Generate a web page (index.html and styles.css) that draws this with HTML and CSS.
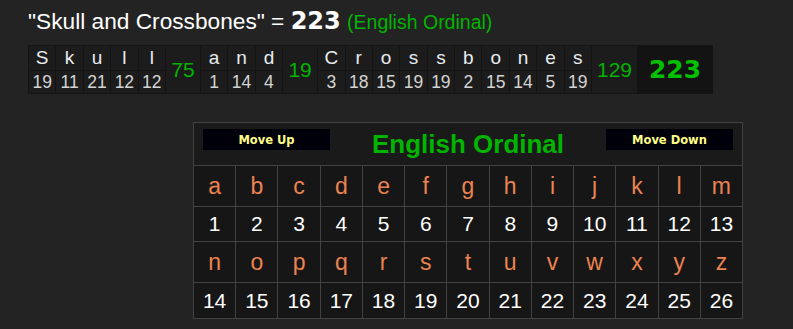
FILE: index.html
```html
<!DOCTYPE html>
<html lang="en">
<head>
<meta charset="utf-8">
<title>Skull and Crossbones – English Ordinal</title>
<link rel="stylesheet" href="styles.css">
</head>
<body>
<div class="page">
  <h1 class="phrase">"Skull and Crossbones" = <b class="phrase-sum">223</b> <span class="phrase-cipher">(English Ordinal)</span></h1>

  <table class="breakdown">
    <tr>
      <td class="ch">S</td><td class="ch">k</td><td class="ch">u</td><td class="ch">l</td><td class="ch">l</td>
      <td class="word-sum" rowspan="2">75</td>
      <td class="ch">a</td><td class="ch">n</td><td class="ch">d</td>
      <td class="word-sum" rowspan="2">19</td>
      <td class="ch">C</td><td class="ch">r</td><td class="ch">o</td><td class="ch">s</td><td class="ch">s</td><td class="ch">b</td><td class="ch">o</td><td class="ch">n</td><td class="ch">e</td><td class="ch">s</td>
      <td class="word-sum wide" rowspan="2">129</td>
      <td class="total" rowspan="2">223</td>
    </tr>
    <tr>
      <td class="val">19</td><td class="val">11</td><td class="val">21</td><td class="val">12</td><td class="val">12</td>
      <td class="val">1</td><td class="val">14</td><td class="val">4</td>
      <td class="val">3</td><td class="val">18</td><td class="val">15</td><td class="val">19</td><td class="val">19</td><td class="val">2</td><td class="val">15</td><td class="val">14</td><td class="val">5</td><td class="val">19</td>
    </tr>
  </table>

  <div class="cipher-box">
    <div class="cipher-head">
      <button class="move-btn" type="button">Move Up</button>
      <h2 class="cipher-title">English Ordinal</h2>
      <button class="move-btn" type="button">Move Down</button>
    </div>
    <div class="cipher-grid">
      <div class="letter">a</div><div class="letter">b</div><div class="letter">c</div><div class="letter">d</div><div class="letter">e</div><div class="letter">f</div><div class="letter">g</div><div class="letter">h</div><div class="letter">i</div><div class="letter">j</div><div class="letter">k</div><div class="letter">l</div><div class="letter">m</div>
      <div class="num">1</div><div class="num">2</div><div class="num">3</div><div class="num">4</div><div class="num">5</div><div class="num">6</div><div class="num">7</div><div class="num">8</div><div class="num">9</div><div class="num">10</div><div class="num">11</div><div class="num">12</div><div class="num">13</div>
      <div class="letter">n</div><div class="letter">o</div><div class="letter">p</div><div class="letter">q</div><div class="letter">r</div><div class="letter">s</div><div class="letter">t</div><div class="letter">u</div><div class="letter">v</div><div class="letter">w</div><div class="letter">x</div><div class="letter">y</div><div class="letter">z</div>
      <div class="num">14</div><div class="num">15</div><div class="num">16</div><div class="num">17</div><div class="num">18</div><div class="num">19</div><div class="num">20</div><div class="num">21</div><div class="num">22</div><div class="num">23</div><div class="num">24</div><div class="num">25</div><div class="num">26</div>
    </div>
  </div>
</div>
</body>
</html>
```

FILE: styles.css
```css
html, body {
  margin: 0;
  padding: 0;
  background: #232323;
}

.page {
  padding: 6px 0 0 28px;
  font-family: "Liberation Sans", Arial, sans-serif;
  color: #fff;
}

/* phrase heading */
.phrase {
  margin: 0;
  font-size: 22.7px;
  font-weight: normal;
  line-height: 30px;
  white-space: nowrap;
}

.phrase-sum {
  font-family: "DejaVu Sans", Verdana, sans-serif;
  font-size: 24px;
  font-weight: bold;
}

.phrase-cipher {
  font-size: 19.5px;
  color: #00b400;
}

/* letter-by-letter breakdown */
.breakdown {
  margin-top: 8px;
  border-collapse: separate;
  border-spacing: 1px;
  background: #141414;
}

.breakdown td {
  padding: 0;
  text-align: center;
  background: #1c1c1c;
}

.breakdown .ch {
  width: 26.4px;
  height: 24px;
  font-size: 19px;
  color: #e8ecf0;
}

.breakdown .val {
  height: 22px;
  font-size: 17.5px;
  color: #d4d4d4;
}

.breakdown .word-sum {
  width: 34px;
  font-size: 21px;
  color: #00b400;
}

.breakdown .word-sum.wide {
  width: 45px;
}

.breakdown .total {
  width: 74px;
  font-family: "DejaVu Sans", Verdana, sans-serif;
  font-size: 25px;
  font-weight: bold;
  color: #00c000;
  background: #131313;
}

/* cipher chart */
.cipher-box {
  margin: 28px 0 0 165px;
  width: 548px;
  border: 1px solid #424242;
  background: #1a1a1a;
}

.cipher-head {
  display: flex;
  justify-content: space-between;
  align-items: flex-start;
  height: 42px;
  padding: 6px 9px 0;
  box-sizing: border-box;
}

.move-btn {
  width: 127px;
  height: 21px;
  padding: 0;
  border: none;
  background: #00000a;
  color: #ffff88;
  font-family: "DejaVu Sans", Verdana, sans-serif;
  font-size: 11.5px;
  font-weight: bold;
}

.cipher-title {
  margin: 0;
  font-size: 26px;
  line-height: 30px;
  font-weight: bold;
  color: #00b400;
}

.cipher-grid {
  display: grid;
  grid-template-columns: repeat(13, 1fr);
  grid-template-rows: 40px 34px 40px 35px;
  gap: 1px;
  border-top: 1px solid #424242;
  background: #424242;
}

.cipher-grid > div {
  display: flex;
  align-items: center;
  justify-content: center;
  background: #161616;
}

.letter {
  font-size: 23px;
  color: #ec8350;
}

.num {
  font-size: 21px;
  color: #fff;
}
```
